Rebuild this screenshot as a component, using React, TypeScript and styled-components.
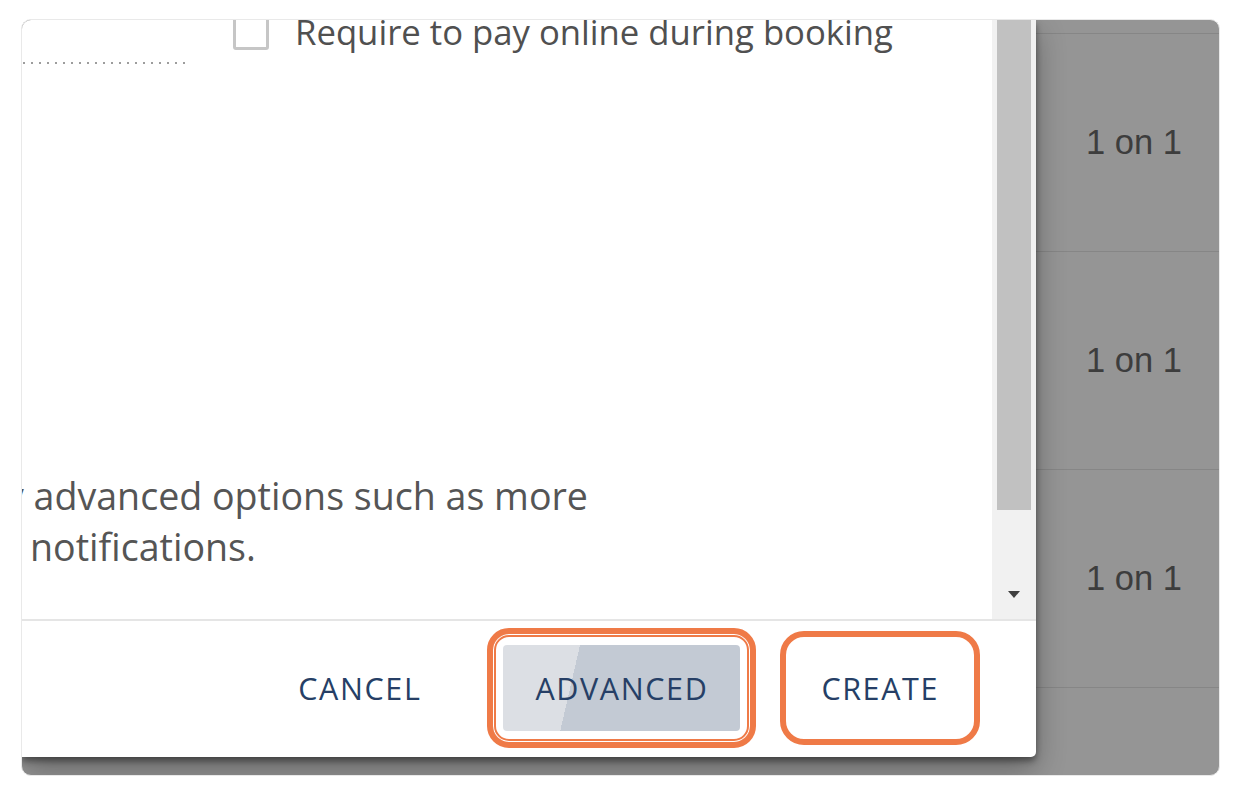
import { FC } from 'react';
import styled, { createGlobalStyle } from 'styled-components';

const GlobalStyle = createGlobalStyle`
  html, body {
    margin: 0;
    background: #fff;
  }
  body {
    font-family: 'Open Sans', 'Liberation Sans', sans-serif;
  }
`;

const Frame = styled.div`
  margin: 19px 0 0 21px;
  width: 1199px;
  height: 757px;
  box-sizing: border-box;
  border: 1px solid #e9e9e9;
  border-radius: 10px;
  overflow: hidden;
  background: #959595;
  display: grid;
  grid-template-columns: 1014px 1fr;
  align-items: start;
`;

const Dialog = styled.div`
  position: relative;
  z-index: 1;
  height: 737px;
  background: #fff;
  border-bottom-right-radius: 5px;
  box-shadow: 0 4px 6px rgba(0, 0, 0, 0.4), 0 12px 30px rgba(0, 0, 0, 0.32);
  display: flex;
  flex-direction: column;
  overflow: hidden;
`;

const ScrollArea = styled.div`
  display: flex;
  height: 599px;
  border-bottom: 2px solid #e5e5e5;
`;

const Content = styled.div`
  flex: 1;
  overflow: hidden;
  color: #555;
`;

const TopRow = styled.div`
  display: flex;
  margin-top: -6px;
  height: 50px;
`;

const DottedField = styled.div`
  width: 165px;
  height: 50px;
  flex-shrink: 0;
  background-image: linear-gradient(to right, #9d9d9d 2px, transparent 2px);
  background-size: 8px 2px;
  background-repeat: repeat-x;
  background-position: 1px bottom;
`;

const CheckOption = styled.label`
  display: flex;
  align-items: center;
  gap: 26px;
  height: 36px;
  margin-left: 46px;
  font-size: 34.7px;
  line-height: 36px;
  color: #505050;
  white-space: nowrap;
`;

const Checkbox = styled.span`
  width: 36px;
  height: 36px;
  box-sizing: border-box;
  border: 3px solid #c6c6c6;
  border-radius: 3px;
  flex-shrink: 0;
`;

const Description = styled.div`
  margin-top: 406px;
  font-size: 37.6px;
  line-height: 51px;
`;

const Line = styled.div<{ $indent: number }>`
  white-space: nowrap;
  margin-left: ${(p) => p.$indent}px;
`;

const Scrollbar = styled.div`
  width: 44px;
  background: #f1f1f1;
  display: flex;
  flex-direction: column;
  align-items: center;
`;

const Thumb = styled.div`
  width: 34px;
  height: 490px;
  background: #c1c1c1;
`;

const Arrow = styled.div`
  margin-top: auto;
  margin-bottom: 21px;
  width: 0;
  height: 0;
  border-left: 6px solid transparent;
  border-right: 6px solid transparent;
  border-top: 7px solid #3f3f3f;
`;

const Footer = styled.div`
  flex: 1;
  display: flex;
  align-items: center;
  justify-content: flex-end;
  padding: 0 56px 2px 0;
`;

const TextButton = styled.button<{ $bg?: string }>`
  height: 86px;
  padding: 0 32px;
  border: none;
  border-radius: 4px;
  background: ${(p) => p.$bg ?? 'transparent'};
  font-family: 'Open Sans', 'Liberation Sans', sans-serif;
  font-size: 30.5px;
  letter-spacing: 1.6px;
  color: #263f66;
  cursor: pointer;
`;

const Ring = styled.div<{ $pad: string; $radius: number; $double?: boolean; $ml: number }>`
  margin-left: ${(p) => p.$ml}px;
  padding: ${(p) => p.$pad};
  border: 6px solid #ef7a47;
  border-radius: ${(p) => p.$radius}px;
  display: flex;
  box-shadow: ${(p) => (p.$double ? 'inset 0 0 0 1px #fff, inset 0 0 0 3px #ef7a47' : 'none')};
`;

const Table = styled.div`
  padding-top: 13px;
`;

const Row = styled.div`
  height: 217px;
  border-top: 1px solid #868686;
  display: flex;
  align-items: center;
  padding-left: 50px;
  font-family: 'Liberation Sans', Arial, sans-serif;
  font-size: 34.5px;
  color: #3d3d3d;
`;

const rows = ['1 on 1', '1 on 1', '1 on 1', ''];

const App: FC = () => (
  <>
    <GlobalStyle />
    <Frame>
      <Dialog>
        <ScrollArea>
          <Content>
            <TopRow>
              <DottedField />
              <CheckOption>
                <Checkbox />
                Require to pay online during booking
              </CheckOption>
            </TopRow>
            <Description>
              <Line $indent={-17}>y advanced options such as more</Line>
              <Line $indent={8}>notifications.</Line>
            </Description>
          </Content>
          <Scrollbar>
            <Thumb />
            <Arrow />
          </Scrollbar>
        </ScrollArea>
        <Footer>
          <TextButton>CANCEL</TextButton>
          <Ring $ml={34} $pad="11px 10px" $radius={22} $double>
            <TextButton $bg="linear-gradient(103deg, #dcdfe4 0 30%, #c3cad4 30%)">ADVANCED</TextButton>
          </Ring>
          <Ring $ml={24} $pad="8px 3px" $radius={24}>
            <TextButton>CREATE</TextButton>
          </Ring>
        </Footer>
      </Dialog>
      <Table>
        {rows.map((r, i) => (
          <Row key={i}>{r}</Row>
        ))}
      </Table>
    </Frame>
  </>
);

export default App;
